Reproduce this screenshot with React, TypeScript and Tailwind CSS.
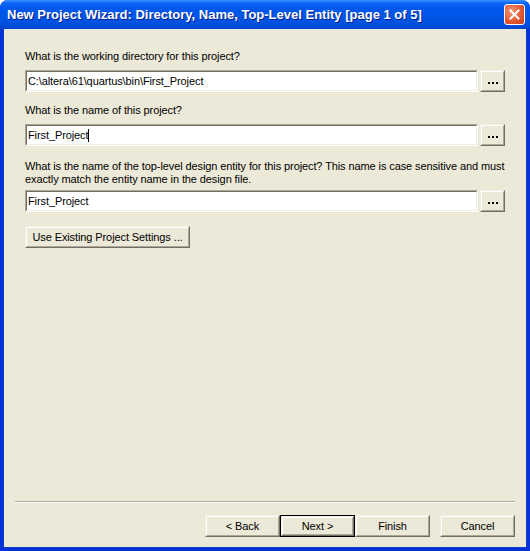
import React from 'react';

const font = "font-['Liberation_Sans',Arial,sans-serif]";

const TextBox: React.FC<{ value: string; caret?: boolean }> = ({ value, caret }) => (
  <div className="flex-1 h-[22px] border border-t-[#aca899] border-l-[#aca899] border-b-white border-r-white">
    <div className="h-full border border-t-[#716f64] border-l-[#716f64] border-b-[#f1efe2] border-r-[#f1efe2] bg-white flex items-center pl-[1px] text-[11px] tracking-[-0.1px] text-black">
      <span>{value}</span>
      {caret && <span className="w-px h-[13px] bg-black" />}
    </div>
  </div>
);

const XpButton: React.FC<{ label: React.ReactNode; className?: string; isDefault?: boolean }> = ({
  label,
  className = '',
  isDefault,
}) => {
  const inner = (
    <div className="h-full border border-t-[#f1efe2] border-l-[#f1efe2] border-b-[#716f64] border-r-[#716f64]">
      <div className="h-full border border-t-white border-l-white border-b-[#aca899] border-r-[#aca899] bg-[#ece9d8] flex items-center justify-center text-[11px] tracking-[-0.1px] text-black whitespace-nowrap">
        {label}
      </div>
    </div>
  );
  if (isDefault) {
    return <div className={`h-[22px] border border-black ${className}`}>{inner}</div>;
  }
  return <div className={`h-[22px] ${className}`}>{inner}</div>;
};

const BrowseButton = () => (
  <XpButton
    className="w-[25px] ml-[2px]"
    label={
      <span className="flex gap-[2px] mt-[4px]">
        <span className="w-[2px] h-[2px] bg-black" />
        <span className="w-[2px] h-[2px] bg-black" />
        <span className="w-[2px] h-[2px] bg-black" />
      </span>
    }
  />
);

const App: React.FC = () => {
  return (
    <div className={`w-[530px] h-[551px] flex flex-col bg-[#0831d9] rounded-t-[8px] overflow-hidden ${font}`}>
      {/* title bar */}
      <div className="h-[29px] flex items-center justify-between pl-[7px] pr-[5px] bg-[linear-gradient(to_bottom,#3d95ff_0px,#0a66f4_3px,#0058ee_8px,#0055e5_18px,#0050dc_24px,#0045cf_29px)]">
        <span className="text-white font-bold text-[13px] [text-shadow:1px_1px_0_#0a1e8c]">
          New Project Wizard: Directory, Name, Top-Level Entity [page 1 of 5]
        </span>
        <div className="w-[21px] h-[21px] rounded-[3px] border border-white bg-[radial-gradient(circle_at_35%_35%,#f29a7a,#e35a34_55%,#c5391a)] flex items-center justify-center">
          <svg width="11" height="11" viewBox="0 0 11 11">
            <path d="M1.5 1.5 L9.5 9.5 M9.5 1.5 L1.5 9.5" stroke="white" strokeWidth="2" strokeLinecap="square" />
          </svg>
        </div>
      </div>

      {/* client */}
      <div className="flex-1 flex flex-col mx-[3px] mb-[3px] bg-[#ece9d8] border-l border-r border-b border-[#0a3fc8]">
        <div className="flex-1 flex flex-col px-[21px] pt-[21px] text-[11px] tracking-[-0.1px] text-black">
          <div className="leading-[13px]">What is the working directory for this project?</div>
          <div className="flex mt-[7px]">
            <TextBox value="C:\altera\61\quartus\bin\First_Project" />
            <BrowseButton />
          </div>

          <div className="leading-[13px] mt-[12px]">What is the name of this project?</div>
          <div className="flex mt-[7px]">
            <TextBox value="First_Project" caret />
            <BrowseButton />
          </div>

          <div className="leading-[13px] mt-[14px] whitespace-nowrap">
            What is the name of the top-level design entity for this project? This name is case sensitive and must
            <br />
            exactly match the entity name in the design file.
          </div>
          <div className="flex mt-[4px]">
            <TextBox value="First_Project" />
            <BrowseButton />
          </div>

          <div className="mt-[14px]">
            <XpButton className="w-[165px]" label="Use Existing Project Settings ..." />
          </div>

          <div className="flex-1" />

          <div className="mx-[-10px] border-t border-t-[#aca899] border-b border-b-white" />

          <div className="flex justify-end mt-[12px] mb-[10px] mr-[-10px]">
            <XpButton className="w-[75px]" label="< Back" />
            <XpButton className="w-[75px]" label="Next >" isDefault />
            <XpButton className="w-[75px]" label="Finish" />
            <XpButton className="w-[75px] ml-[10px]" label="Cancel" />
          </div>
        </div>
      </div>
    </div>
  );
};

export default App;
